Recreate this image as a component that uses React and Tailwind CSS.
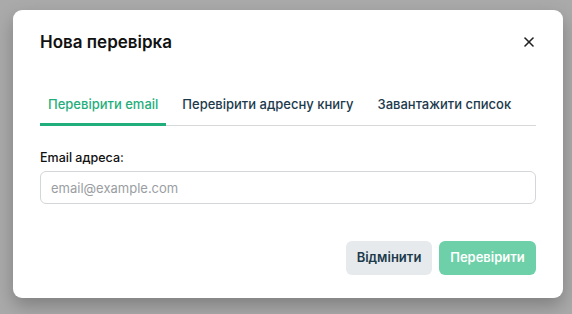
import React, { useState } from 'react';
import { X } from 'lucide-react';

const tabs = ['Перевірити email', 'Перевірити адресну книгу', 'Завантажити список'];

export default function App() {
  const [active, setActive] = useState(0);
  const [email, setEmail] = useState('');

  return (
    <div className="w-[572px] h-[314px] bg-[#a9aaa9] pt-[10px] pl-[13px] overflow-hidden" style={{ fontFamily: 'Inter, "Noto Sans", sans-serif' }}>
      <div className="w-[550px] h-[288px] bg-white rounded-[9px] shadow-[0_8px_18px_rgba(0,0,0,0.25)] px-[27px] pt-[20px] pb-[23px] flex flex-col">
        {/* header */}
        <div className="flex items-center justify-between h-[24px]">
          <h2 className="text-[17px] font-semibold text-[#111] leading-6">Нова перевірка</h2>
          <button className="text-[#222] -mr-[1px]"><X size={16} strokeWidth={2.4} /></button>
        </div>

        {/* tabs */}
        <div className="mt-[28px] flex gap-2 border-b border-[#d6d8da]">
          {tabs.map((t, i) => (
            <button
              key={t}
              onClick={() => setActive(i)}
              className={`px-2 pt-[12px] pb-[9px] text-[13px] font-medium leading-5 border-b-[3px] -mb-px ${active === i ? 'text-[#1fae7c] border-[#1fae7c]' : 'text-[#1c3a4c] border-transparent'}`}
            >
              {t}
            </button>
          ))}
        </div>

        {/* form */}
        <label className="mt-[23px] text-[12.5px] font-medium text-[#111] leading-[18px]">Email адреса:</label>
        <input
          value={email}
          onChange={e => setEmail(e.target.value)}
          placeholder="email@example.com"
          className="mt-[4px] h-[33px] w-full border border-[#d4d6d8] rounded-[6px] px-[10px] text-[13px] text-[#222] placeholder-[#9a9ea2] outline-none"
        />

        <div className="mt-auto flex justify-end gap-[7px]">
          <button className="h-[34px] w-[86px] rounded-[6px] bg-[#e6eaec] text-[13px] font-semibold text-[#1c3a4c]">Відмінити</button>
          <button className="h-[34px] w-[97px] rounded-[6px] bg-[#6dd0a8] text-[13px] font-semibold text-white">Перевірити</button>
        </div>
      </div>
    </div>
  );
}
